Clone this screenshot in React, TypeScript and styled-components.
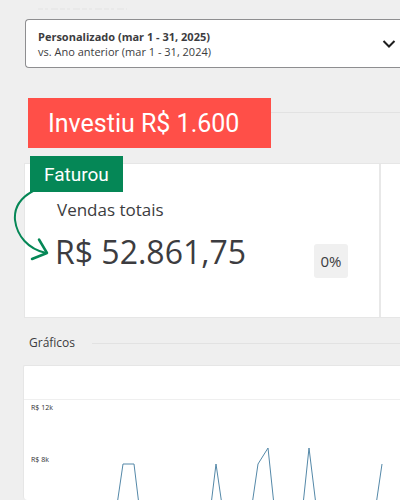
import React from "react";
import styled, { createGlobalStyle } from "styled-components";

const GlobalStyle = createGlobalStyle`
  *, *::before, *::after { box-sizing: border-box; }
  body {
    margin: 0;
    background: #efefef;
    color: #3c3c40;
    font-family: "Open Sans", "Noto Sans", sans-serif;
    overflow: hidden;
  }
`;

const Page = styled.main`
  display: flex;
  flex-direction: column;
  height: 100vh;
  overflow: hidden;
`;

const FadedEdge = styled.svg`
  width: 92px;
  height: 4px;
  margin: 7px 0 8px 37px;
  flex-shrink: 0;
  fill: none;
  stroke: #e9e9e9;
  stroke-width: 2;
`;

const RangeButton = styled.button`
  display: flex;
  align-items: center;
  justify-content: space-between;
  height: 49px;
  margin-left: 25px;
  padding: 0 4px 0 12px;
  flex-shrink: 0;
  border: 1px solid #8e8e90;
  border-right: 0;
  border-radius: 4px 0 0 4px;
  background: #fff;
  color: #3c3c40;
  font-family: inherit;
  text-align: left;
`;

const RangeText = styled.span<{ $strong?: boolean }>`
  display: block;
  font-size: 11px;
  line-height: 15px;
  white-space: nowrap;
  font-weight: ${(p) => (p.$strong ? 700 : 400)};
`;

const Chevron = styled.svg`
  width: 14px;
  height: 10px;
  fill: none;
  stroke: #1e1e1e;
  stroke-width: 2;
`;

const InvestedRow = styled.div`
  display: flex;
  flex-shrink: 0;
  margin: 30px 0 15px 28px;
`;

const Tag = styled.strong<{ $tone: "red" | "green" }>`
  display: flex;
  align-items: center;
  height: ${(p) => (p.$tone === "red" ? 50 : 36)}px;
  padding: ${(p) => (p.$tone === "red" ? "0 32px 0 20px" : "0 14px")};
  background: ${(p) => (p.$tone === "red" ? "#ff4f48" : "#058756")};
  color: #fff;
  font-family: Roboto, sans-serif;
  font-size: ${(p) => (p.$tone === "red" ? 25 : 19)}px;
  font-weight: 400;
  white-space: nowrap;
`;

const Rule = styled.hr`
  flex: 1;
  height: 1px;
  margin: 0;
  border: 0;
  background: #e2e2e2;
`;

const TopRule = styled(Rule)`
  margin-top: 14px;
`;

const Cards = styled.section`
  position: relative;
  display: grid;
  grid-template-columns: 1fr 19px;
  flex-shrink: 0;
  height: 155px;
  margin-left: 24px;
  border: 1px solid #e6e6e6;
  border-right: 0;
  background: #fff;
`;

const SalesCard = styled.article`
  display: flex;
  flex-direction: column;
  padding: 34px 31px 0 30px;
  border-right: 2px solid #e8e8e8;
`;

const SalesTitle = styled.h2`
  margin: 0 2px;
  font-size: 17px;
  line-height: 24px;
  font-weight: 400;
`;

const SalesRow = styled.div`
  display: flex;
  align-items: flex-start;
  justify-content: space-between;
`;

const Amount = styled.p`
  margin: 8px 0 0;
  font-size: 32px;
  line-height: 44px;
  white-space: nowrap;
`;

const Change = styled.span`
  margin-top: 22px;
  width: 34px;
  border-radius: 3px;
  background: #f0f0f0;
  font-size: 15px;
  line-height: 34px;
  text-align: center;
`;

const RevenueTag = styled.div`
  position: absolute;
  top: -8px;
  left: 5px;
`;

const Arrow = styled.svg`
  position: absolute;
  top: 27px;
  left: -13px;
  width: 40px;
  height: 74px;
  fill: none;
  stroke: #058756;
  stroke-linecap: round;
  stroke-linejoin: round;
`;

const ChartHeading = styled.div`
  display: flex;
  align-items: center;
  gap: 17px;
  flex-shrink: 0;
  margin: 15px 0 12px 29px;
`;

const ChartTitle = styled.h2`
  margin: 0;
  font-size: 12px;
  line-height: 20px;
  font-weight: 400;
`;

const ChartCard = styled.section`
  flex: 1;
  margin-left: 23px;
  border: 1px solid #e6e6e6;
  border-right: 0;
  border-bottom: 0;
  border-radius: 2px 0 0 4px;
  background: #fff;
  overflow: hidden;
`;

const ChartToolbar = styled.div`
  height: 34px;
  border-bottom: 1px solid #efefef;
`;

const Plot = styled.svg`
  display: block;
  width: 376px;
  height: 100px;

  text {
    fill: #2c2c30;
    font-family: "Open Sans", "Noto Sans", sans-serif;
    font-size: 7px;
  }
`;

const series = [
  "93,105 99,64 110,64 115,105",
  "187,105 192,64 198,105",
  "228,105 234,64 244,48 250,105",
  "279,105 285,48 292,105",
  "352,105 358,64",
];

export default function App() {
  return (
    <>
      <GlobalStyle />
      <Page>
        <FadedEdge viewBox="0 0 92 4" aria-hidden="true">
          <path d="M1 2H90" strokeDasharray="5 2 3 3 7 2" />
        </FadedEdge>
        <RangeButton type="button">
          <span>
            <RangeText $strong>Personalizado (mar 1 - 31, 2025)</RangeText>
            <RangeText>vs. Ano anterior (mar 1 - 31, 2024)</RangeText>
          </span>
          <Chevron viewBox="0 0 14 10" aria-hidden="true">
            <path d="M1.5 2 7 7.5 12.5 2" />
          </Chevron>
        </RangeButton>
        <InvestedRow>
          <Tag $tone="red">Investiu R$ 1.600</Tag>
          <TopRule />
        </InvestedRow>
        <Cards>
          <SalesCard>
            <SalesTitle>Vendas totais</SalesTitle>
            <SalesRow>
              <Amount>R$ 52.861,75</Amount>
              <Change>0%</Change>
            </SalesRow>
          </SalesCard>
          <Arrow viewBox="12 191 40 74" aria-hidden="true">
            <path d="M33 191C20 198 14 208 15 220C17 236 28 249 46 253" strokeWidth="2" />
            <path d="M39 239.5 47 253 32 259" strokeWidth="2.5" />
          </Arrow>
          <RevenueTag>
            <Tag $tone="green">Faturou</Tag>
          </RevenueTag>
        </Cards>
        <ChartHeading>
          <ChartTitle>Gráficos</ChartTitle>
          <Rule />
        </ChartHeading>
        <ChartCard>
          <ChartToolbar />
          <Plot viewBox="0 0 376 100" role="img" aria-label="Vendas por dia">
            <text x="7" y="10">R$ 12k</text>
            <text x="7" y="62">R$ 8k</text>
            {series.map((points) => (
              <polyline key={points} points={points} fill="none" stroke="#5488a8" strokeWidth="1" />
            ))}
          </Plot>
        </ChartCard>
      </Page>
    </>
  );
}
